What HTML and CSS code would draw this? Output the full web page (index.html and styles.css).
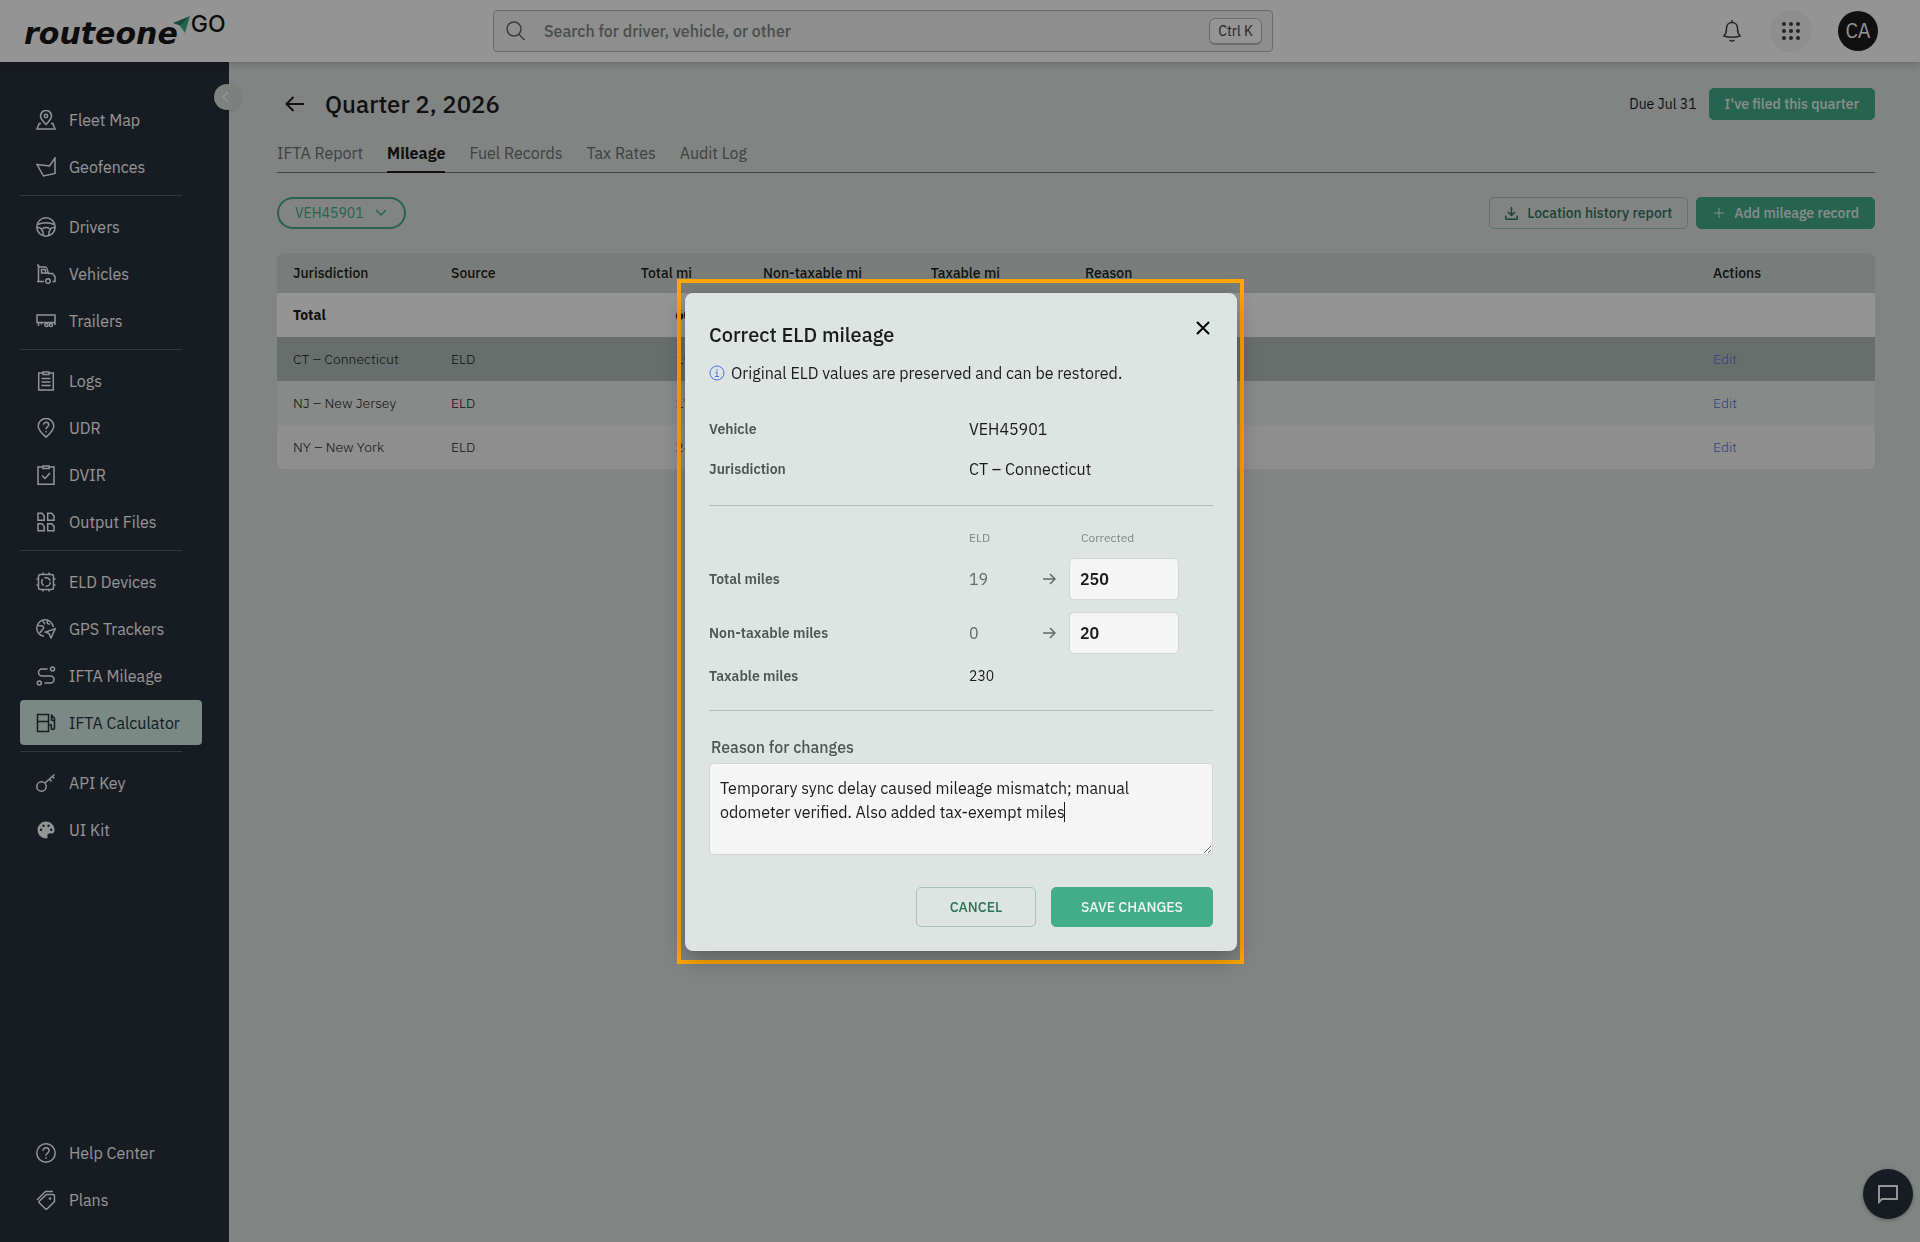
FILE: index.html
```
<!DOCTYPE html>
<html lang="en">
<head>
  <meta charset="UTF-8">
  <meta name="viewport" content="width=device-width, initial-scale=1.0">
  <title>IFTA Calculator - Quarter 2, 2026</title>
  <link rel="stylesheet" href="styles.css">
</head>
<body>

<header class="topbar">
  <a class="logo" href="#">
    <span class="logo-name">routeone</span>
    <svg class="logo-plane" width="18" height="18" viewBox="0 0 18 18"><path d="M0 7 17 0 8 10Z" fill="#2f7f68"/><path d="M17 0 12 17 7 10Z" fill="#43ac88"/></svg>
    <span class="logo-go">GO</span>
  </a>
  <div class="search">
    <svg width="22" height="22" viewBox="0 0 22 22"><circle cx="9" cy="9" r="7"/><path d="M14 14.500l5.500 5.500"/></svg>
    <input type="text" aria-label="Search" placeholder="Search for driver, vehicle, or other">
    <kbd>Ctrl K</kbd>
  </div>
  <div class="top-actions">
    <button class="icon-btn" aria-label="Notifications">
      <svg width="24" height="24" viewBox="0 0 24 24"><path d="M12 1v2.500M12 3.500c-3.500 0-5.500 2.600-5.500 6 0 4-.6 5.500-2.500 7.500 5 1.600 11 1.600 16 0-1.900-2-2.500-3.500-2.500-7.500 0-3.400-2-6-5.500-6zM9.500 21c1.500 1.300 3.500 1.300 5 0"/></svg>
    </button>
    <button class="apps-btn" aria-label="Apps">
      <svg width="20" height="20" viewBox="0 0 20 20"><circle cx="3" cy="3" r="2"/><circle cx="10" cy="3" r="2"/><circle cx="17" cy="3" r="2"/><circle cx="3" cy="10" r="2"/><circle cx="10" cy="10" r="2"/><circle cx="17" cy="10" r="2"/><circle cx="3" cy="17" r="2"/><circle cx="10" cy="17" r="2"/><circle cx="17" cy="17" r="2"/></svg>
    </button>
    <button class="avatar">CA</button>
  </div>
</header>

<div class="layout">
  <aside class="sidebar">
    <button class="collapse" aria-label="Collapse menu">
      <svg width="8" height="12" viewBox="0 0 8 12"><path d="M7 1 2 6l5 5"/></svg>
    </button>
    <nav>
      <a href="#"><svg viewBox="0 0 20 20"><path d="M10 14.500C7 11.500 4.500 9 4.500 6a5.500 5.500 0 0 1 11 0c0 3-2.500 5.500-5.500 8.500zM5 13.500H3.200L1 19h18l-2.200-5.500H15"/><circle cx="10" cy="6" r="1.700"/></svg>Fleet Map</a>
      <a href="#"><svg viewBox="0 0 20 20"><path d="M1 7.500 13.500 9l5.500-8v15.500L7.500 19z"/></svg>Geofences</a>
      <hr>
      <a href="#"><svg viewBox="0 0 20 20"><circle cx="10" cy="10" r="9.200"/><path d="M1.500 7.500c5.500-2.300 11.500-2.300 17 0M1 10.500c3.500-.5 6 1.500 6.500 8M19 10.500c-3.500-.5-6 1.500-6.500 8M7 12c0-2 6-2 6 0"/></svg>Drivers</a>
      <a href="#"><svg viewBox="0 0 20 20"><path d="M1 1.200h1.500V17.500M1 17.500h7M2.500 3h7c1 0 1.500 1 3 6.500h4l2.500 3v5h-2.500M5.500 9V5.500H9l1 3.500zM5.500 9h7"/><circle cx="12" cy="17" r="2.300"/></svg>Vehicles</a>
      <a href="#"><svg viewBox="0 0 20 20"><path d="M1 4h18v7.500H1zM2.500 11.500V15M5.500 11.500v2M19 11.500V14"/><circle cx="10.500" cy="14" r="1.600"/><circle cx="15" cy="14" r="1.600"/></svg>Trailers</a>
      <hr>
      <a href="#"><svg viewBox="0 0 20 20"><path d="M7 2H2.700v17h14.600V2H13M7 1h6v2.500H7zM5.500 7.500h9M5.500 11h9M5.500 14.500h9"/></svg>Logs</a>
      <a href="#"><svg viewBox="0 0 20 20"><path d="M10 19.200C6 15.500 2.200 12.500 2.200 8a7.800 7.500 0 0 1 15.600 0c0 4.500-3.800 7.500-7.800 11.200zM7.500 6.800c0-3.300 5.200-3.200 5.200 0 0 2-2.700 2-2.700 4.400M10 13v1.500"/></svg>UDR</a>
      <a href="#"><svg viewBox="0 0 20 20"><path d="M7 2H2v17.200h16V2h-5M7 1h6v2.500H7zM6 10.500l3 3L14 8"/></svg>DVIR</a>
      <a href="#"><svg viewBox="0 0 20 20"><path d="M2 1.200h4L8.200 4v4.300H2zM11.700 1.200h4L18 4v4.300h-6.300zM2 11.700h4l2.200 2.700v4.300H2zM11.700 11.700h4l2.300 2.700v4.300h-6.300z"/></svg>Output Files</a>
      <hr>
      <a href="#"><svg viewBox="0 0 20 20"><rect x="2.500" y="2.500" width="15" height="15" rx="2"/><circle cx="10" cy="10" r="4.300" stroke-dasharray="7 2"/><path d="M7 .5v2M13 .5v2M7 17.500v2M13 17.500v2M.5 7h2M.5 13h2M17.500 7h2M17.500 13h2"/></svg>ELD Devices</a>
      <a href="#"><svg viewBox="0 0 20 20"><path d="M8 17.300A8.300 8.300 0 1 1 17.300 8M2 6c2 2 3.500 0 4.500 1s2 2 0 3.500-1 3-3 3M7 1.500c-.5 2 2 2 1.500 4M12 1.500c-2 2.500 0 4 2 3.500M19.200 9.800 9.500 13l3.500 1.500 2 4.500z"/></svg>GPS Trackers</a>
      <a href="#"><svg viewBox="0 0 20 20"><circle cx="16.500" cy="3" r="2"/><circle cx="3.300" cy="17" r="2"/><path d="M11.500 3H6a3.400 3.400 0 0 0 0 7h8.500a3.400 3.400 0 0 1 0 7H8.500"/></svg>IFTA Mileage</a>
      <a href="#" class="active"><svg viewBox="0 0 20 20"><path d="M1.500 1.500h11v17h-11zM1.500 8.500h11M15 1.500l3.500 4V15c0 2-3.200 2-3.200 0v-3h-2.500M15.500 3v4l3 1"/></svg>IFTA Calculator</a>
      <hr>
      <a href="#"><svg viewBox="0 0 20 20"><circle cx="5.500" cy="13.500" r="4.700"/><path d="M9 10l9.500-8.500M13.500 6l2 2.500M16.300 3.500l2 2"/></svg>API Key</a>
      <a href="#"><svg viewBox="0 0 20 20"><path class="solid" fill-rule="evenodd" d="M10 1.500a8.500 8.500 0 0 0 0 17c1.500 0 1.800-1 1.500-2-.4-1.600.2-3 2-3h2.500c1.500 0 2.500-1.500 2.500-3.500 0-5-4-8.500-8.500-8.500zM5 11a1.200 1.200 0 1 1 0-2.400A1.200 1.200 0 0 1 5 11zm2.500-4a1.200 1.200 0 1 1 0-2.400 1.200 1.200 0 0 1 0 2.400zm5 0a1.200 1.200 0 1 1 0-2.400 1.200 1.200 0 0 1 0 2.400zm2.700 4a1.200 1.200 0 1 1 0-2.400 1.200 1.200 0 0 1 0 2.400z"/></svg>UI Kit</a>
    </nav>
    <nav>
      <a href="#"><svg viewBox="0 0 20 20"><circle cx="10" cy="10" r="9.200"/><path d="M7 7.800c0-4 6-3.900 6 0C13 10 10 10 10 12.700M10 14.200v1.600"/></svg>Help Center</a>
      <a href="#"><svg viewBox="0 0 20 20"><path d="M10.500 4.500H17a1.500 1.500 0 0 1 1.500 1.500v5.500l-7 7c-.8.8-1.700.8-2.500 0L3.500 13c-.8-.8-.8-1.200 0-2zM1 10l8.500-8.500h7.500"/><circle cx="14" cy="8.500" r=".6"/></svg>Plans</a>
    </nav>
  </aside>

  <main class="content">
    <div class="page-head">
      <a href="#" class="back" aria-label="Back"><svg width="20" height="16" viewBox="0 0 20 16"><path d="M19 8H2M8.500 1l-7 7 7 7"/></svg></a>
      <h1>Quarter 2, 2026</h1>
      <span class="due">Due Jul 31</span>
      <button class="btn btn-primary">I've filed this quarter</button>
    </div>

    <nav class="tabs">
      <a href="#">IFTA Report</a>
      <a href="#" class="active">Mileage</a>
      <a href="#">Fuel Records</a>
      <a href="#">Tax Rates</a>
      <a href="#">Audit Log</a>
    </nav>

    <div class="toolbar">
      <button class="filter">VEH45901
        <svg width="12" height="8" viewBox="0 0 12 8"><path d="M1 1l5 5 5-5"/></svg>
      </button>
      <button class="btn btn-outline">
        <svg width="13" height="13" viewBox="0 0 13 13"><path d="M6.500 0v8M3 5l3.500 3.500L10 5M.7 8.500v2.300c0 1 .5 1.500 1.500 1.500h8.600c1 0 1.500-.5 1.500-1.500V8.500"/></svg>
        Location history report
      </button>
      <button class="btn btn-primary">
        <svg width="10" height="10" viewBox="0 0 10 10"><path d="M5 0v10M0 5h10"/></svg>
        Add mileage record
      </button>
    </div>

    <table class="records">
      <thead>
        <tr>
          <th class="col-jurisdiction">Jurisdiction</th>
          <th class="col-source">Source</th>
          <th class="col-total num">Total mi</th>
          <th class="col-nontax num">Non-taxable mi</th>
          <th class="col-tax num">Taxable mi</th>
          <th class="col-reason">Reason</th>
          <th class="col-actions">Actions</th>
        </tr>
      </thead>
      <tbody>
        <tr class="total"><td>Total</td><td></td><td class="num">60</td><td class="num">0</td><td class="num">60</td><td></td><td></td></tr>
        <tr class="selected"><td>CT – Connecticut</td><td>ELD</td><td class="num">19</td><td class="num">0</td><td class="num">19</td><td></td><td><a href="#">Edit</a></td></tr>
        <tr class="alt"><td>NJ – New Jersey</td><td>ELD</td><td class="num">17</td><td class="num">0</td><td class="num">17</td><td></td><td><a href="#">Edit</a></td></tr>
        <tr><td>NY – New York</td><td>ELD</td><td class="num">24</td><td class="num">0</td><td class="num">24</td><td></td><td><a href="#">Edit</a></td></tr>
      </tbody>
    </table>
  </main>
</div>

<button class="chat" aria-label="Open chat">
  <svg width="20" height="20" viewBox="0 0 20 20"><path d="M1 18V2h18v13H4z"/></svg>
</button>

<div class="overlay">
  <div class="highlight">
    <form class="modal" role="dialog" aria-labelledby="modal-title">
      <button type="button" class="close" aria-label="Close">
        <svg width="14" height="14" viewBox="0 0 14 14"><path d="M1 1l12 12M13 1 1 13"/></svg>
      </button>
      <h2 id="modal-title">Correct ELD mileage</h2>
      <p class="note">
        <svg width="16" height="16" viewBox="0 0 16 16"><circle cx="8" cy="8" r="7"/><path d="M6.500 7H8v4.500M6 11.500h4M8 4v1.500"/></svg>
        Original ELD values are preserved and can be restored.
      </p>

      <dl class="info">
        <dt>Vehicle</dt><dd>VEH45901</dd>
        <dt>Jurisdiction</dt><dd>CT – Connecticut</dd>
      </dl>
      <hr>
      <div class="miles">
        <span class="head head-eld">ELD</span>
        <span class="head head-corrected">Corrected</span>

        <label for="total">Total miles</label>
        <span class="old">19</span>
        <svg width="14" height="14" viewBox="0 0 14 14"><path d="M1 7h12M8 2l5 5-5 5"/></svg>
        <input type="text" id="total" value="250">

        <label for="nontax">Non-taxable miles</label>
        <span class="old">0</span>
        <svg width="14" height="14" viewBox="0 0 14 14"><path d="M1 7h12M8 2l5 5-5 5"/></svg>
        <input type="text" id="nontax" value="20">

        <span class="label">Taxable miles</span>
        <output for="total nontax">230</output>
      </div>
      <hr>
      <label class="reason-label" for="reason">Reason for changes</label>
      <div class="reason-box">
        <textarea id="reason">Temporary sync delay caused mileage mismatch; manual odometer verified. Also added tax-exempt miles</textarea>
        <span class="caret"></span>
      </div>
      <div class="modal-actions">
        <button type="button" class="btn btn-outline">CANCEL</button>
        <button type="submit" class="btn btn-primary">SAVE CHANGES</button>
      </div>
    </form>
  </div>
</div>

</body>
</html>
```
FILE: styles.css
```
* {
  box-sizing: border-box;
}

body {
  margin: 0;
  min-height: 100vh;
  display: flex;
  flex-direction: column;
  font-family: 'IBM Plex Sans', Roboto, sans-serif;
  font-size: 16px;
  line-height: 24px;
  color: #1a1c1b;
  background: #dfe4e1;
}

button, input, textarea {
  font: inherit;
}

button {
  cursor: pointer;
}

a {
  text-decoration: none;
}

svg {
  flex: none;
  fill: none;
  stroke: currentColor;
  stroke-width: 1.5;
}

/* top bar */
.topbar {
  position: relative;
  z-index: 1;
  display: flex;
  align-items: center;
  height: 62px;
  padding: 0 42px 0 24px;
  background: #fff;
  box-shadow: 0 2px 8px rgba(0,0,0,0.2);
}

.logo {
  display: flex;
  align-items: flex-start;
  flex: 0 1 469px;
  color: #151716;
}

.logo-name {
  font-family: 'DejaVu Sans', sans-serif;
  font-size: 30px;
  font-weight: bold;
  font-style: italic;
  line-height: 32px;
  margin-top: 6px;
}

.logo-plane {
  margin: 4px 0 0 -5px;
  stroke: none;
}

.logo-go {
  margin-top: 4px;
  font-family: Inter, sans-serif;
  font-size: 23px;
  font-weight: 500;
  line-height: 16px;
}

.search {
  display: flex;
  align-items: center;
  gap: 17px;
  flex: 0 1 780px;
  height: 42px;
  padding: 0 10px 0 11px;
  border: 1px solid #b5bab8;
  border-radius: 4px;
  background: #f5f5f5;
  color: #5f6b67;
}

.search input {
  flex: 1;
  min-width: 0;
  padding: 0;
  border: none;
  background: none;
  font-weight: 500;
}

.search input::placeholder {
  color: #7d8783;
}

.search kbd {
  padding: 0 8px;
  border: 1px solid #b2beb9;
  border-bottom-width: 2px;
  border-radius: 6px;
  background: #fff;
  color: #3c4240;
  font-family: inherit;
  font-size: 14px;
}

.top-actions {
  display: flex;
  align-items: center;
  gap: 26px;
  margin-left: auto;
  color: #3c4240;
}

.top-actions button {
  display: flex;
  align-items: center;
  justify-content: center;
  padding: 0;
  border: none;
  border-radius: 50%;
  color: inherit;
}

.top-actions .icon-btn {
  background: none;
}

.top-actions .apps-btn {
  width: 42px;
  height: 42px;
  background: #f5f5f5;
}

.apps-btn svg {
  fill: currentColor;
  stroke: none;
}

.top-actions .avatar {
  width: 40px;
  height: 40px;
  background: #1a1c1b;
  color: #fff;
  font-size: 20px;
}

/* sidebar */
.layout {
  display: flex;
  flex: 1;
}

.sidebar {
  position: relative;
  display: flex;
  flex-direction: column;
  justify-content: space-between;
  flex: 0 0 229px;
  padding: 35px 27px 20px 20px;
  background: #292f3b;
}

.sidebar nav {
  display: flex;
  flex-direction: column;
  gap: 2px;
}

.sidebar nav a {
  display: flex;
  align-items: center;
  gap: 13px;
  height: 45px;
  padding-left: 16px;
  border-radius: 4px;
  color: #fff;
}

.sidebar nav a.active {
  background: #d2ece4;
  color: #292f3b;
}

.sidebar nav svg {
  width: 20px;
  height: 20px;
}

.sidebar hr {
  width: 162px;
  margin: 4px 0 6px;
  border: none;
  border-top: 1px solid #5a606c;
}

.sidebar .solid {
  fill: currentColor;
  stroke: none;
}

.collapse {
  position: absolute;
  top: 22px;
  right: -11px;
  display: flex;
  align-items: center;
  width: 26px;
  height: 26px;
  padding: 0 0 0 7px;
  border: none;
  border-radius: 50%;
  background: linear-gradient(to right, #dcdcdc 15px, #d8dcda 15px);
  color: #fff;
  box-shadow: 1px 1px 4px rgba(0,0,0,0.1);
}

/* page */
.content {
  flex: 1;
  min-width: 0;
  padding: 26px 45px 0 48px;
}

.page-head {
  display: flex;
  align-items: center;
}

.back {
  display: flex;
  width: 48px;
  padding-left: 8px;
  color: #1a1c1b;
}

.back svg {
  stroke-width: 2;
}

h1 {
  margin: 0;
  font-size: 24px;
  font-weight: 500;
  line-height: 32px;
}

.due {
  margin: 0 12px 0 auto;
  font-size: 14px;
}

.btn {
  display: flex;
  align-items: center;
  justify-content: center;
  height: 32px;
  padding: 0 15px;
  border: 1px solid #43ac88;
  border-radius: 5px;
  font-size: 14px;
  font-weight: 500;
}

.btn-primary {
  background: #43ac88;
  color: #eef5f2;
}

.btn-outline {
  border-color: #a3c4b8;
  background: none;
  color: #2f7459;
}

.btn svg {
  margin-right: 9px;
}

.tabs {
  display: flex;
  gap: 24px;
  margin-top: 20px;
  border-bottom: 1px solid #6b7270;
}

.tabs a {
  height: 32px;
  line-height: 26px;
  color: #6b7270;
}

.tabs a.active {
  margin-bottom: -1px;
  height: 33px;
  border-bottom: 2px solid #1a1c1b;
  color: #1a1c1b;
  font-weight: 700;
}

.toolbar {
  display: flex;
  gap: 8px;
  margin: 24px 0;
}

.filter {
  display: flex;
  align-items: center;
  gap: 11px;
  height: 32px;
  margin-right: auto;
  padding: 0 17px 0 16px;
  border: 2px solid #43ac88;
  border-radius: 16px;
  background: none;
  color: #43ac88;
  font-size: 14px;
}

.toolbar .btn-primary svg {
  margin: 0 10px 0 2px;
  stroke-width: 1;
}

.records {
  width: 100%;
  border-collapse: collapse;
  border-radius: 6px;
  overflow: hidden;
  table-layout: fixed;
  background: #f5f5f5;
  font-size: 14px;
  font-weight: 300;
}

.records th {
  height: 40px;
  padding: 0 16px;
  background: #cfd8d4;
  font-weight: 500;
  text-align: left;
  white-space: nowrap;
}

.records td {
  height: 44px;
  padding: 0 16px;
}

.records .num {
  text-align: right;
}

.records a {
  color: #5a6fd8;
}

.col-jurisdiction { width: 158px; }
.col-source { width: 103px; }
.col-total { width: 170px; }
.col-nontax { width: 170px; }
.col-tax { width: 138px; }
.col-actions { width: 178px; }

.records .col-reason {
  padding-left: 69px;
}

.records .total {
  background: #fff;
  font-weight: 700;
}

.records .selected {
  background: #b2beb9;
}

.records .alt {
  background: #e8eeeb;
}

.chat {
  position: fixed;
  right: 7px;
  bottom: 23px;
  display: flex;
  align-items: center;
  justify-content: center;
  width: 50px;
  height: 50px;
  border: none;
  border-radius: 50%;
  background: #292f3b;
  color: #fff;
  box-shadow: 0 1px 4px rgba(0,0,0,0.3);
}

.chat svg {
  stroke-width: 2;
}

/* correction dialog */
.overlay {
  position: fixed;
  inset: 0;
  z-index: 10;
  display: flex;
  align-items: center;
  justify-content: center;
  padding: 1px 0 0 1px;
  background: rgba(0,0,0,0.42);
}

.highlight {
  padding: 10px 3px 9px 4px;
  border: 4px solid #ffa800;
}

.modal {
  position: relative;
  width: 552px;
  padding: 28px 24px 24px;
  border-radius: 8px;
  background: #dde4e1;
  box-shadow: 0 8px 24px rgba(0,0,0,0.3);
}

.close {
  position: absolute;
  top: 23px;
  right: 22px;
  display: flex;
  padding: 5px;
  border: none;
  background: none;
}

.close svg {
  stroke-width: 2;
}

h2 {
  margin: 0;
  font-size: 20px;
  font-weight: 500;
  line-height: 28px;
}

.note {
  display: flex;
  align-items: center;
  gap: 6px;
  margin: 12px 0 0;
}

.note svg {
  color: #4a6fe0;
  stroke-width: 1;
}

.info {
  display: grid;
  grid-template-columns: 260px 1fr;
  gap: 16px 0;
  margin: 32px 0 24px;
}

.info dd {
  margin: 0;
}

.info dt, .miles label, .miles .label {
  color: #4d5653;
  font-size: 14px;
  font-weight: 600;
}

.modal hr {
  margin: 0;
  border: none;
  border-top: 1px solid #b2beb9;
}

.miles {
  display: grid;
  grid-template-columns: 260px 73px 27px 110px;
  align-items: center;
  row-gap: 12px;
  margin: 24px 0;
}

.head {
  color: #7d8783;
  font-size: 12px;
  line-height: 16px;
}

.head-eld {
  grid-column: 2;
}

.head-corrected {
  grid-column: 4;
  padding-left: 12px;
}

.old, .miles svg {
  color: #5f6b67;
}

.miles input {
  width: 100%;
  height: 42px;
  padding: 0 10px;
  border: 1px solid #d0d5de;
  border-radius: 5px;
  background: #f5f5f5;
  color: #1a1c1b;
  font-weight: 600;
}

.miles .label, .miles output {
  font-size: 14px;
  line-height: 20px;
}

.reason-label {
  display: block;
  margin: 24px 2px 4px;
  color: #4d5653;
  font-weight: 500;
}

.reason-box {
  position: relative;
}

.reason-box textarea {
  display: block;
  width: 100%;
  height: 92px;
  padding: 12px 10px;
  border: 1px solid #d0d5de;
  border-radius: 4px;
  background: #f5f5f5;
  color: #1a1c1b;
}

/* text cursor after the last word */
.caret {
  position: absolute;
  top: 39px;
  left: 355px;
  width: 1px;
  height: 20px;
  background: #1a1c1b;
}

.modal-actions {
  display: flex;
  justify-content: flex-end;
  gap: 15px;
  margin-top: 32px;
}

.modal-actions .btn {
  height: 40px;
  min-width: 120px;
  padding: 0 29px;
}
```
